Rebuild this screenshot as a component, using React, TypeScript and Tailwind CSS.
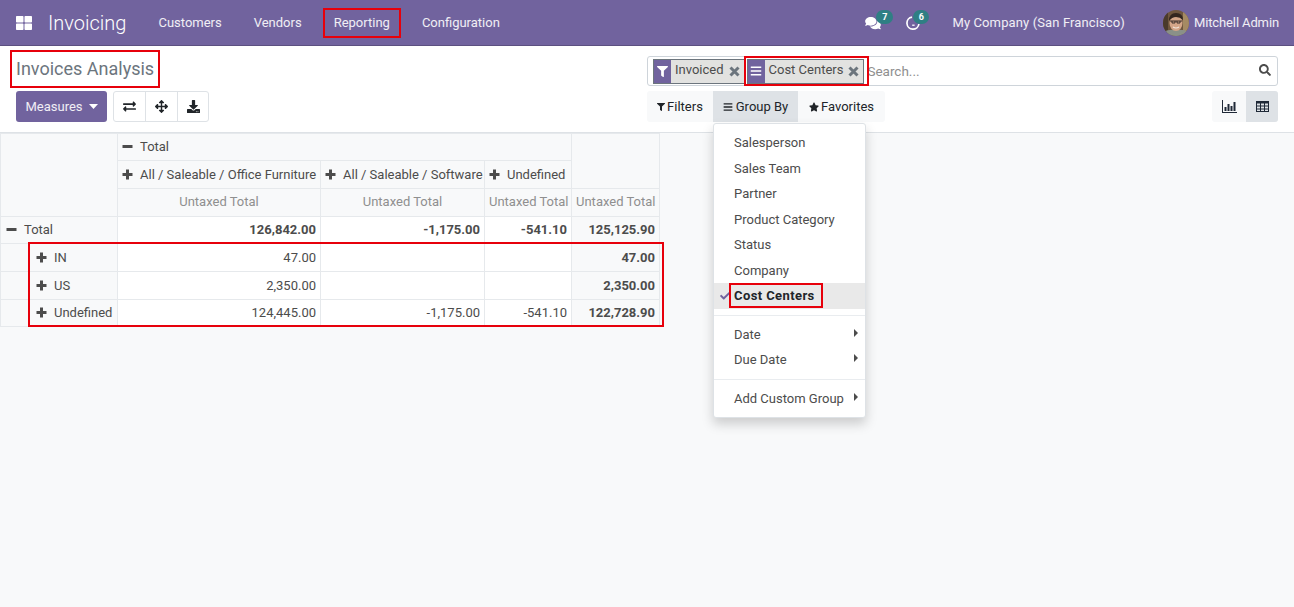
import { FaArrowsAlt, FaBars, FaCheck, FaComments, FaDownload, FaExchangeAlt, FaFilter, FaSearch, FaStar, FaThLarge } from "react-icons/fa";

const navItems = ["Customers", "Vendors", "Reporting", "Configuration"];
const groupItems = ["Salesperson", "Sales Team", "Partner", "Product Category", "Status", "Company"];

function Avatar() {
  return (
    <svg viewBox="0 0 26 26" className="w-[26px] h-[26px] rounded-full">
      <rect width="26" height="26" fill="#6f563e" />
      <rect x="20" width="6" height="26" fill="#a58a63" />
      <rect width="5" height="26" fill="#4a3a2c" />
      <path d="M0 26 V22 Q6 19 13 20 Q21 19 26 22 V26 Z" fill="#8a9088" />
      <ellipse cx="13" cy="13" rx="6.5" ry="8" fill="#d3a588" />
      <path d="M6 11 Q6 3 13 3 Q20 3 20 10 Q17 7 13 7 Q9 7 6 11 Z" fill="#33261f" />
      <path d="M7 11 H19 M9 11 V13 H12 V11 M14 11 V13 H17 V11" stroke="#2b2522" strokeWidth="0.9" fill="none" />
      <path d="M10 17 Q13 19 16 17" stroke="#f3e6dc" strokeWidth="1.2" fill="none" />
    </svg>
  );
}

function ClockMoon() {
  return (
    <svg viewBox="0 0 14 14" className="w-[14px] h-[14px]">
      <path d="M6 1.2 A6 6 0 1 0 12.9 8" stroke="#fff" strokeWidth="1.7" fill="none" />
      <path d="M6.2 9.2 H8.6" stroke="#fff" strokeWidth="1.3" />
    </svg>
  );
}

function BarChartIcon() {
  return (
    <svg viewBox="0 0 15 13" className="w-[15px] h-[13px]" fill="#1f2937">
      <path d="M0 0 H1 V12 H15 V13 H0 Z" />
      <rect x="2.5" y="7" width="2" height="4" />
      <rect x="5.5" y="4" width="2" height="7" />
      <rect x="8.5" y="6" width="2" height="5" />
      <rect x="11.5" y="2" width="2" height="9" />
    </svg>
  );
}

function TableIcon() {
  return (
    <svg viewBox="0 0 13 11" className="w-[13px] h-[11px]" fill="none" stroke="#1f2937">
      <rect x="0.5" y="0.5" width="12" height="10" strokeWidth="1" />
      <path d="M0 1.5 H13" strokeWidth="2" />
      <path d="M0 5 H13 M0 8 H13 M4.5 2 V11 M8.5 2 V11" strokeWidth="1" />
    </svg>
  );
}

function CrossIcon() {
  return (
    <svg viewBox="0 0 11 11" className="w-[11px] h-[11px]" stroke="#6c757d" strokeWidth="3">
      <path d="M1.5 1.5 L9.5 9.5 M9.5 1.5 L1.5 9.5" />
    </svg>
  );
}

function PlusIcon() {
  return (
    <svg viewBox="0 0 11 11" className="w-[11px] h-[11px] mr-[7px] shrink-0" fill="#4c4c4c">
      <path d="M4 0.5 H7 V4 H10.5 V7 H7 V10.5 H4 V7 H0.5 V4 H4 Z" />
    </svg>
  );
}

function MinusIcon() {
  return (
    <svg viewBox="0 0 11 11" className="w-[11px] h-[11px] mr-[7px] shrink-0" fill="#4c4c4c">
      <rect x="0.5" y="4" width="10" height="3" />
    </svg>
  );
}

function CaretDown() {
  return (
    <svg viewBox="0 0 9 5" className="w-[9px] h-[5px]" fill="#fff">
      <path d="M0 0 H9 L4.5 5 Z" />
    </svg>
  );
}

function CaretRight() {
  return (
    <svg viewBox="0 0 4 8" className="absolute right-[7px] top-[7px] w-[4px] h-[8px]" fill="#4c4c4c">
      <path d="M0 0 L4 4 L0 8 Z" />
    </svg>
  );
}

function Facet({ label, icon }: { label: string; icon: React.ReactNode }) {
  return (
    <div className="flex h-[25px] items-stretch border border-[#6c757d] bg-[#e2e2e0]">
      <div className="flex w-[17px] items-center justify-center bg-[#71639e] text-white">{icon}</div>
      <span className="pl-[4px] pr-[5px] leading-[20px] text-[#4c4c4c]">{label}</span>
      <span className="flex items-center pr-[4px]">
        <CrossIcon />
      </span>
    </div>
  );
}

function Expand({ open, tight, label }: { open?: boolean; tight?: boolean; label: string }) {
  return (
    <span className="inline-flex items-center whitespace-nowrap">
      {open ? <MinusIcon /> : <PlusIcon />}
      <span className={tight ? "pt-[1px]" : "pt-[2px]"}>{label}</span>
    </span>
  );
}

function Head({ children, className = "", colSpan, rowSpan }: { children?: React.ReactNode; className?: string; colSpan?: number; rowSpan?: number }) {
  return (
    <th colSpan={colSpan} rowSpan={rowSpan} className={`border border-[#e6e9ec] bg-[#f8f9fa] px-[4px] font-normal ${className}`}>
      {children}
    </th>
  );
}

const measure = "text-center text-[#8f8f8f] whitespace-nowrap pb-[2px]";

const rows = [
  { label: "IN", a: "47.00", b: "", c: "", t: "47.00" },
  { label: "US", a: "2,350.00", b: "", c: "", t: "2,350.00" },
  { label: "Undefined", a: "124,445.00", b: "-1,175.00", c: "-541.10", t: "122,728.90" },
];

function PivotTable() {
  return (
    <table className="border-collapse table-fixed w-[660px] text-[#4c4c4c] text-[13px] leading-[18px]">
      <colgroup>
        <col className="w-[117px]" />
        <col className="w-[203px]" />
        <col className="w-[164px]" />
        <col className="w-[87px]" />
        <col className="w-[88px]" />
      </colgroup>
      <thead>
        <tr className="h-[27px]">
          <Head rowSpan={3} />
          <Head colSpan={3} className="text-left"><Expand open tight label="Total" /></Head>
          <Head rowSpan={2} />
        </tr>
        <tr className="h-[28px]">
          <Head className="text-left"><Expand label="All / Saleable / Office Furniture" /></Head>
          <Head className="text-left"><Expand label="All / Saleable / Software" /></Head>
          <Head className="text-left"><Expand label="Undefined" /></Head>
        </tr>
        <tr className="h-[28px]">
          <Head className={measure}>Untaxed Total</Head>
          <Head className={measure}>Untaxed Total</Head>
          <Head className={measure}>Untaxed Total</Head>
          <Head className={measure}>Untaxed Total</Head>
        </tr>
      </thead>
      <tbody>
        <tr className="h-[27px]">
          <Head className="text-left pl-[5px]"><Expand open tight label="Total" /></Head>
          <td className="border border-[#e6e9ec] bg-white px-[4px] text-right font-bold">126,842.00</td>
          <td className="border border-[#e6e9ec] bg-white px-[4px] text-right font-bold">-1,175.00</td>
          <td className="border border-[#e6e9ec] bg-white px-[4px] text-right font-bold">-541.10</td>
          <td className="border border-[#e6e9ec] bg-[#f8f9fa] px-[4px] text-right font-bold">125,125.90</td>
        </tr>
        {rows.map((r, i) => (
          <tr key={r.label} className={i === 2 ? "h-[27px]" : "h-[28px]"}>
            <Head className="text-left pl-[35px]"><Expand tight={i === 2} label={r.label} /></Head>
            <td className="border border-[#e6e9ec] bg-white px-[4px] text-right">{r.a}</td>
            <td className="border border-[#e6e9ec] bg-white px-[4px] text-right">{r.b}</td>
            <td className="border border-[#e6e9ec] bg-white px-[4px] text-right">{r.c}</td>
            <td className="border border-[#e6e9ec] bg-[#f8f9fa] px-[4px] text-right font-bold">{r.t}</td>
          </tr>
        ))}
      </tbody>
    </table>
  );
}

function GroupMenu() {
  return (
    <div className="absolute left-0 top-[32px] z-10 w-[153px] rounded-[3px] border border-[#dee2e6] bg-white text-[13px] text-[#4c4c4c] shadow-[0_6px_12px_rgba(0,0,0,0.18)] pt-[6px] pb-[6px]">
      {groupItems.map((g) => (
        <div key={g} className="h-[25.5px] pl-[20px] leading-[25.5px]">{g}</div>
      ))}
      <div className="relative h-[25.5px] bg-[#e9e9e9] pl-[20px] font-bold leading-[25.5px] tracking-[0.4px] text-[#212529]">
        <FaCheck className="absolute left-[6px] top-[8px] w-[10px] h-[10px] text-[#71639e]" />
        Cost Centers
        <div className="absolute left-[15px] top-0 h-[25px] w-[94px] border-2 border-red-600" />
      </div>
      <div className="my-[6px] border-t border-[#e9ecef]" />
      {["Date", "Due Date"].map((g) => (
        <div key={g} className="relative h-[25.5px] pl-[20px] leading-[25.5px]">
          {g}
          <CaretRight />
        </div>
      ))}
      <div className="my-[6px] border-t border-[#e9ecef]" />
      <div className="relative h-[25.5px] pl-[20px] leading-[25.5px]">
        Add Custom Group
        <CaretRight />
      </div>
    </div>
  );
}

export default function App() {
  return (
    <div className="relative h-[607px] w-[1294px] overflow-hidden bg-[#f8f9fa] font-['Roboto',sans-serif] text-[13px]">
      <nav className="flex h-[46px] items-center bg-[#71639e] border-b border-[#5c5080] text-white/90">
        <FaThLarge className="ml-[16px] w-[16px] h-[16px] text-white" />
        <span className="ml-[16px] text-[20px] font-light text-white">Invoicing</span>
        <div className="ml-[16px] flex">
          {navItems.map((n) => (
            <div key={n} className="relative px-[16px] leading-[30px]">
              {n}
              {n === "Reporting" && <div className="absolute left-[5px] right-[5px] top-0 bottom-0 border-2 border-red-600" />}
            </div>
          ))}
        </div>
        <div className="ml-auto flex items-center pr-[15px]">
          <div className="relative mr-[25px]">
            <FaComments className="w-[16px] h-[14px] text-white" />
            <span className="absolute left-[11px] top-[-6px] h-[14px] w-[17px] rounded-full bg-[#2f7f84] text-center text-[9px] font-bold leading-[14px] text-white">7</span>
          </div>
          <div className="relative mr-[32px]">
            <ClockMoon />
            <span className="absolute left-[7px] top-[-6px] h-[14px] w-[16px] rounded-full bg-[#2f7f84] text-center text-[9px] font-bold leading-[14px] text-white">6</span>
          </div>
          <span className="mr-[38px] tracking-[0.12px]">My Company (San Francisco)</span>
          <Avatar />
          <span className="ml-[5px] tracking-[-0.12px]">Mitchell Admin</span>
        </div>
      </nav>

      <header className="h-[87px] border-b border-[#dee2e6] bg-white pl-[16px] pr-[16px] pt-[10px]">
        <div className="flex justify-between">
          <h1 className="relative text-[18px] font-normal leading-[26px] text-[#6c757d]">
            Invoices Analysis
            <div className="absolute left-[-6px] top-[-6px] h-[38px] w-[150px] border-2 border-red-600" />
          </h1>
          <div className="relative flex h-[30px] w-[631px] items-center gap-[2px] rounded-[3px] border border-[#ced4da] bg-white pl-[5px]">
            <Facet label="Invoiced" icon={<FaFilter className="w-[11px] h-[11px]" />} />
            <Facet label="Cost Centers" icon={<FaBars className="w-[12px] h-[12px]" />} />
            <span className="ml-[1px] mt-[1px] text-[13.5px] text-[#8f8f8f]">Search...</span>
            <FaSearch className="absolute right-[6px] top-[7px] w-[12px] h-[12px] text-[#4c4c4c]" />
            <div className="absolute left-[96px] top-[-1px] h-[30px] w-[125px] border-2 border-red-600" />
          </div>
        </div>
        <div className="mt-[5px] flex">
          <div className="flex h-[31px] w-[91px] items-center justify-center gap-[6px] rounded-[3px] bg-[#71639e] text-white/90">
            Measures
            <CaretDown />
          </div>
          <div className="ml-[6px] flex h-[31px] rounded-[3px] border border-[#dee2e6] text-[#212529]">
            <div className="flex w-[32px] items-center justify-center border-r border-[#dee2e6]"><FaExchangeAlt className="w-[13px] h-[13px]" /></div>
            <div className="flex w-[32px] items-center justify-center border-r border-[#dee2e6]"><FaArrowsAlt className="w-[13px] h-[13px]" /></div>
            <div className="flex w-[30px] items-center justify-center"><FaDownload className="w-[13px] h-[13px]" /></div>
          </div>
          <div className="relative ml-[438px] flex h-[31px] items-center rounded-[3px] bg-[#f8f9fa] text-[#212529]">
            <div className="flex h-full w-[66px] items-center justify-center gap-[2px]"><FaFilter className="w-[8px] h-[8px]" />Filters</div>
            <div className="relative flex h-full w-[85px] items-center justify-center gap-[3px] bg-[#dee2e6]">
              <FaBars className="w-[10px] h-[10px]" />Group By
              <GroupMenu />
            </div>
            <div className="flex h-full w-[87px] items-center justify-center gap-[2px]"><FaStar className="w-[10px] h-[10px]" />Favorites</div>
          </div>
          <div className="ml-auto flex h-[31px] rounded-[3px] bg-[#f8f9fa]">
            <div className="flex w-[34px] items-center justify-center"><BarChartIcon /></div>
            <div className="flex w-[32px] items-center justify-center rounded-r-[3px] bg-[#dee2e6]"><TableIcon /></div>
          </div>
        </div>
      </header>

      <main className="relative">
        <PivotTable />
        <div className="absolute left-[28px] top-[109px] h-[85px] w-[636px] border-2 border-red-600" />
      </main>
    </div>
  );
}
